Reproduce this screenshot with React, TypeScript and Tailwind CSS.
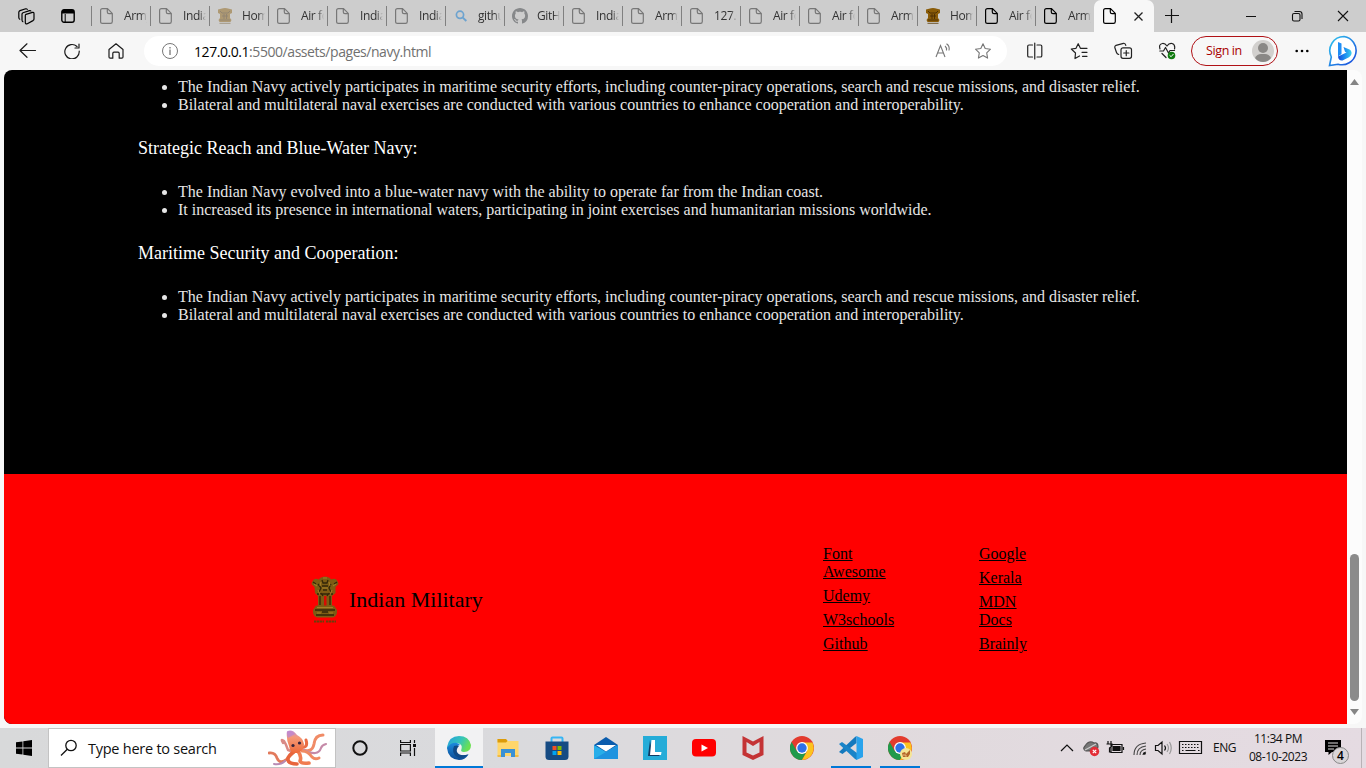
import React from "react";

type TabKind = "doc" | "emblem" | "search" | "github";

const tabs: { label: string; kind: TabKind; fresh?: boolean }[] = [
  { label: "Army", kind: "doc" },
  { label: "Indian", kind: "doc" },
  { label: "Home", kind: "emblem" },
  { label: "Air force", kind: "doc" },
  { label: "Indian", kind: "doc" },
  { label: "Indian", kind: "doc" },
  { label: "github", kind: "search" },
  { label: "GitHub", kind: "github" },
  { label: "Indian", kind: "doc" },
  { label: "Army", kind: "doc" },
  { label: "127.0", kind: "doc" },
  { label: "Air force", kind: "doc" },
  { label: "Air force", kind: "doc" },
  { label: "Army", kind: "doc" },
  { label: "Home", kind: "emblem", fresh: true },
  { label: "Air force", kind: "doc", fresh: true },
  { label: "Army", kind: "doc", fresh: true },
];

function DocIcon({ className }: { className: string }) {
  return (
    <svg className={"h-4 w-[13px] shrink-0 " + className} viewBox="0 0 13 16" fill="none" stroke="currentColor" strokeWidth="1.2">
      <path d="M2.5.6H7.5L12.3 5.4V13.5Q12.3 15.4 10.5 15.4H2.5Q.6 15.4 .6 13.5V2.5Q.6.6 2.5.6ZM7.3.8V4Q7.3 5.6 9 5.6H12.1" />
    </svg>
  );
}

function Emblem({ className }: { className: string }) {
  return (
    <svg className={"shrink-0 " + className} viewBox="0 0 28 47" preserveAspectRatio="none">
      <path d="M9 2Q14-1 19 2L20 3.500Q26 1 27.500 8L24.500 11L24.500 17L21 20L21 30H7L7 20L4 17L3.500 11L.5 8Q2 1 8 3.500Z" fill="#7d5c14" />
      <path d="M13 20H15.500V30H13Z" fill="#d90b00" />
      <path d="M5 29.500H23L26 34Q26.500 40 22 41.500H6Q1.500 40 2 34Z" fill="#7d5c14" />
      <path d="M4 34H24M5 39H23M7 8L10 12L8 16M20 8L18 12L20 16M11 4L12 7H16L17 4M11 10H17M12 14H16M9 20V29M19 20V29M11 36H17M6 18H22M2 6L5 8M26 6L23 8M10 17L12 20M18 17L16 20" stroke="#332608" strokeWidth="1.300" fill="none" />
      <path d="M3 8L6 10M25 8L22 10M12 2H16M10 6L9 10M18 6L19 10M6 31.500H22M6 37H10M18 37H22M11 12H17M7 14L9 19M21 14L19 19" stroke="#a8842b" strokeWidth=".9" fill="none" />
      <path d="M3 45.500H13M15 45.500H25" stroke="#6b3e0b" strokeWidth="2.200" strokeDasharray="2.500 .5" />
    </svg>
  );
}

function EmblemFavicon({ fresh }: { fresh?: boolean }) {
  return (
    <svg className={"h-4 w-4 shrink-0 " + (fresh ? "" : "opacity-45")} viewBox="0 0 16 16">
      <path d="M4 .8Q8-.6 12 .8L15 1.500V5L13 6V10L14.500 12L13.500 14H2.500L1.500 12L3 10V6L1 5V1.500Z" fill="#8a5c08" />
      <path d="M3 3L5 5H11L13 3M5 8H11M7 6V11M9.500 6V11M3 12H13" stroke="#4a2e04" strokeWidth=".9" fill="none" />
      <path d="M2.500 15.300H13.500" stroke="#70552a" strokeWidth="1" />
    </svg>
  );
}

function TabIcon({ kind, fresh }: { kind: TabKind; fresh?: boolean }) {
  if (kind === "emblem") return <EmblemFavicon fresh={fresh} />;
  if (kind === "search")
    return (
      <svg className="h-4 w-4 shrink-0 text-[#6da3cf]" viewBox="0 0 16 16" fill="none" stroke="currentColor">
        <circle cx="7" cy="6.800" r="3.600" strokeWidth="1.700" />
        <path d="M9.800 9.600L13.300 13" strokeWidth="2" />
      </svg>
    );
  if (kind === "github")
    return (
      <svg className="h-4 w-4 shrink-0 text-[#86888a]" viewBox="0 0 16 16" fill="currentColor">
        <path d="M8 0C3.580 0 0 3.580 0 8c0 3.540 2.290 6.530 5.470 7.590.4.070.55-.17.55-.38 0-.19-.01-.82-.01-1.490-2.010.37-2.530-.49-2.690-.94-.09-.23-.48-.94-.82-1.130-.28-.15-.68-.52-.01-.53.63-.01 1.080.58 1.230.82.72 1.210 1.870.87 2.330.66.07-.52.28-.87.51-1.070-1.780-.2-3.640-.89-3.640-3.950 0-.87.31-1.590.82-2.150-.08-.2-.36-1.020.08-2.120 0 0 .67-.21 2.200.82.64-.18 1.320-.27 2-.27s1.360.09 2 .27c1.530-1.040 2.200-.82 2.200-.82.44 1.100.16 1.920.08 2.120.51.56.82 1.270.82 2.150 0 3.070-1.870 3.750-3.650 3.950.29.25.54.73.54 1.480 0 1.070-.01 1.930-.01 2.200 0 .21.15.46.55.38A8.010 8.010 0 0 0 16 8c0-4.420-3.580-8-8-8z" />
      </svg>
    );
  return <DocIcon className={fresh ? "text-black" : "text-[#777]"} />;
}

function TabStrip() {
  return (
    <div className="flex h-8 bg-[#cdcdcd]">
      <div className="flex w-[91px] shrink-0 items-center pl-[18px]">
        <svg className="h-[17px] w-[17px]" viewBox="0 0 17 17" fill="none" stroke="#000" strokeWidth="1.200" strokeLinejoin="round">
          <path d="M8 6.300L14.500 4.400Q16 4.100 16 5.700V11Q16 12 15 12.600L9.300 15.700Q7.300 16.500 7.300 14.500V7.700Q7.300 6.700 8 6.300ZM5.300 14Q4 13.500 4 12V6.300Q4 5.200 5 4.700L11.500 2.600Q12.800 2.300 13 3.500M2.200 11.500Q.8 11 .8 9.500V4.200Q.8 3.200 2 2.600L7.700.8Q9.200.5 9.500 1.800" />
        </svg>
        <svg className="ml-[26px] h-[14px] w-[14px]" viewBox="0 0 14 14">
          <rect x=".8" y=".8" width="12.400" height="12.400" rx="2.200" fill="none" stroke="#000" strokeWidth="1.400" />
          <path d="M1 1H13V4.500H1Z" />
          <path d="M4.200 5V13" stroke="#000" />
        </svg>
      </div>
      {tabs.map((t, i) => (
        <div key={i} className="flex w-[59px] shrink-0 items-center">
          <div className="h-5 w-px shrink-0 bg-[#808080]" />
          <div className={"flex w-[18px] shrink-0 " + (t.kind === "doc" ? "ml-[8px] mr-[6px]" : "ml-[7px] mr-[7px]")}>
            <TabIcon kind={t.kind} fresh={t.fresh} />
          </div>
          <div className="w-[23px] overflow-hidden whitespace-nowrap font-['Open_Sans',sans-serif] text-[12px] tracking-[-0.4px] text-[#333] [mask-image:linear-gradient(to_right,black_72%,transparent)]">
            {t.label}
          </div>
        </div>
      ))}
      <div className="flex w-[60px] shrink-0 items-center rounded-t-[7px] bg-[#f7f7f7] pl-[9px]">
        <DocIcon className="text-black" />
        <svg className="ml-[18px] h-[9px] w-[9px]" viewBox="0 0 9 9" stroke="#222" strokeWidth="1.300">
          <path d="M.5.5L8.500 8.500M8.500.5L.5 8.500" />
        </svg>
      </div>
      <svg className="ml-[11px] mt-[9px] h-[14px] w-[14px] shrink-0" viewBox="0 0 14 14" stroke="#111" strokeWidth="1.200">
        <path d="M0 6.500H14M6.500 0V14" />
      </svg>
      <svg className="ml-[66px] mt-[9px] h-[14px] w-[104px] shrink-0" viewBox="0 0 104 14" fill="none" stroke="#111" strokeWidth="1.100">
        <path d="M1 7.500H11M93 2L103 12M103 2L93 12" />
        <rect x="47.500" y="4.500" width="7.500" height="7.500" rx="1.500" />
        <path d="M49.500 2.500H54.500Q57 2.500 57 5V10" />
      </svg>
    </div>
  );
}

function BingIcon() {
  return (
    <svg className="ml-[19px] h-8 w-[32px] shrink-0" viewBox="0 0 32 32">
      <defs>
        <linearGradient id="bingRing" x1="0" y1="0" x2="1" y2="1">
          <stop stopColor="#2fc7ee" />
          <stop offset="1" stopColor="#1845dc" />
        </linearGradient>
        <linearGradient id="bingB" x1="0" y1="0" x2="1" y2="0">
          <stop stopColor="#1648d8" />
          <stop offset=".5" stopColor="#1c8cf0" />
          <stop offset="1" stopColor="#3bd0ee" />
        </linearGradient>
      </defs>
      <path d="M16 1.500A14.200 14.200 0 1 1 10 29.200L1.500 30.500L3.300 22A14.200 14.200 0 0 1 16 1.500Z" fill="#fff" stroke="url(#bingRing)" strokeWidth="1.600" />
      <path d="M10 7L13.500 8.500V19L10 21.500Z" fill="#1f8df5" />
      <path d="M15.500 12L21.500 14.500Q24 16 23.500 19Q23 21 21 22.200L14.500 25.500Q10.500 26 10 21.500L18.500 17.500L17 16.800Z" fill="url(#bingB)" />
    </svg>
  );
}

function Toolbar() {
  return (
    <div className="flex h-[38px] items-center bg-[#f7f7f7]">
      <svg className="ml-[19px] h-4 w-[105px] shrink-0" viewBox="0 0 105 16" fill="none" stroke="#1b1b1b" strokeWidth="1.200" strokeLinecap="round" strokeLinejoin="round">
        <path d="M16.500 7.500H1M8 .8L1 7.500L8 14.300" />
        <path d="M58 3.500A7.200 7.200 0 1 0 60.200 8M60 1V5H56" />
        <path d="M90 6.500L97 .8L104 6.500V14Q104 15.200 102.800 15.200H100.200V10.500Q100.200 9.200 99 9.200H95Q93.800 9.200 93.800 10.500V15.200H91.200Q90 15.200 90 14Z" />
      </svg>
      <div className="ml-[20px] flex h-[30px] w-[863px] shrink-0 items-center rounded-full bg-white pl-[18px]">
        <svg className="h-4 w-4" viewBox="0 0 16 16" fill="none" stroke="#777">
          <circle cx="8" cy="8" r="7.500" />
          <path d="M8 6.500V12M8 4V5.400" strokeWidth="1.300" />
        </svg>
        <div className="ml-[16px] w-[714px] font-['Open_Sans',sans-serif] text-[14px] tracking-[-0.44px] text-[#707070]">
          <span className="text-black">127.0.0.1</span>:5500/assets/pages/navy.html
        </div>
        <svg className="ml-[27px] h-4 w-[58px] shrink-0" viewBox="0 0 58 16" fill="none" stroke="#777" strokeWidth="1.100">
          <path d="M1 14L5.500 2.500L10 14M2.500 10H8.500M10 3Q12 4.500 11.500 7.500M11.500.8Q15 3 14 7.500" />
          <path d="M48 .8L50.200 5.500L55.500 6.200L51.700 9.900L52.600 15.100L48 12.600L43.400 15.100L44.300 9.900L40.500 6.200L45.800 5.500Z" strokeLinejoin="round" />
        </svg>
      </div>
      <svg className="ml-[20px] h-[18px] w-[149px] shrink-0" viewBox="0 0 149 18" fill="none" stroke="#222" strokeWidth="1.200" strokeLinecap="round" strokeLinejoin="round">
        <path d="M5.500 3H2Q.7 3 .7 4.300V13.700Q.7 15 2 15H5.500M10 3H13.500Q14.800 3 14.800 4.300V13.700Q14.800 15 13.500 15H10M7.750 1V17" />
        <path d="M52.500 14L48 16.500L48.500 11L44.300 7L49 6.300L51.200 1.700L53.400 6.300H60M55 10.300H60M55.500 14.300H60" />
        <rect x="94" y="5.800" width="10.500" height="10.500" rx="2" />
        <path d="M99.250 8.500V13.700M96.700 11H101.900M91.700 12.500Q90 12 89.500 10.500L87.800 5.500Q87.500 4 89 3.300L96.500 1.300Q98.300 1 98.800 3.300" />
        <path d="M133 7Q131.500 2 135.500 1.500Q138 1.200 140 4Q142 1 145 1.500Q148.500 2.500 147.500 7M132.800 9H136.500L138.500 5.500L141.500 11L143 8.500H147.500M135 11.500L139 15.500" />
        <circle cx="144.500" cy="13.500" r="3.800" fill="#107c10" stroke="none" />
        <path d="M142.900 13.600L144.100 14.700L146.200 12.300" stroke="#fff" strokeWidth="1" />
      </svg>
      <div className="ml-[15px] flex h-[30px] w-[87px] shrink-0 items-center rounded-full border border-[#b01116] pl-[14px] font-['Open_Sans',sans-serif] text-[12.500px] tracking-[-0.38px] text-[#a80000]">
        <span className="w-[46px] whitespace-nowrap">Sign in</span>
        <svg className="h-[22px] w-[22px]" viewBox="0 0 22 22">
          <circle cx="11" cy="11" r="11" fill="#d2d0ce" />
          <circle cx="11" cy="8" r="5" fill="#8a8886" />
          <path d="M3 18Q5 14 9 14H13Q17 14 19 18Q16 22 11 22Q6 22 3 18Z" fill="#8a8886" />
        </svg>
      </div>
      <svg className="ml-[17px] h-[4px] w-[14px] shrink-0" viewBox="0 0 14 4">
        <circle cx="1.700" cy="2" r="1.300" /><circle cx="7" cy="2" r="1.300" /><circle cx="12.300" cy="2" r="1.300" />
      </svg>
      <BingIcon />
    </div>
  );
}

function Bullets({ items }: { items: string[] }) {
  return (
    <ul className="list-disc pl-10">
      {items.map((s) => (
        <li key={s} className="whitespace-nowrap">{s}</li>
      ))}
    </ul>
  );
}

function Heading({ children }: { children: React.ReactNode }) {
  return <h3 className="flex h-[69px] items-center pb-[2px] text-[18px] font-normal text-white">{children}</h3>;
}

const security = [
  "The Indian Navy actively participates in maritime security efforts, including counter-piracy operations, search and rescue missions, and disaster relief.",
  "Bilateral and multilateral naval exercises are conducted with various countries to enhance cooperation and interoperability.",
];

function FooterLinks({ links, className }: { links: string[]; className: string }) {
  return (
    <div className={"flex shrink-0 flex-col gap-1.5 text-[16px] leading-[18px] underline " + className}>
      {links.map((l) => (
        <a key={l} className="whitespace-pre-line">{l}</a>
      ))}
    </div>
  );
}

function Page() {
  return (
    <div className="mx-1 flex h-[654px] overflow-hidden rounded-lg bg-[#fcfcfc]">
      <div className="flex w-[1343px] shrink-0 flex-col bg-black font-['Liberation_Serif',serif]">
        <div className="h-[404px] pl-[134px] pt-[8px] text-[16px] leading-[18px] text-[#e6e6e6]">
          <Bullets items={security} />
          <Heading>Strategic Reach and Blue-Water Navy:</Heading>
          <Bullets
            items={[
              "The Indian Navy evolved into a blue-water navy with the ability to operate far from the Indian coast.",
              "It increased its presence in international waters, participating in joint exercises and humanitarian missions worldwide.",
            ]}
          />
          <Heading>Maritime Security and Cooperation:</Heading>
          <Bullets items={security} />
        </div>
        <div className="flex h-[250px] bg-[#ff0000] text-black">
          <div className="flex w-[819px] items-center pl-[307px]">
            <Emblem className="h-[47px] w-[28px]" />
            <span className="ml-[10px] text-[22px]">Indian Military</span>
          </div>
          <FooterLinks className="w-[156px] pt-[71px]" links={["Font\nAwesome", "Udemy", "W3schools", "Github"]} />
          <FooterLinks className="w-[156px] pt-[71px]" links={["Google", "Kerala", "MDN\nDocs", "Brainly"]} />
        </div>
      </div>
      <div className="flex w-[15px] flex-col items-center">
        <svg className="mt-[9px] h-[6px] w-[9px]" viewBox="0 0 9 6"><path d="M4.500 0L9 6H0Z" fill="#858585" /></svg>
        <div className="mt-[469px] h-[147px] w-[9px] rounded-full bg-[#8b8b8b]" />
        <svg className="mt-[8px] h-[6px] w-[9px]" viewBox="0 0 9 6"><path d="M0 0H9L4.500 6Z" fill="#858585" /></svg>
      </div>
    </div>
  );
}

function Octopus() {
  return (
    <svg className="h-[36px] w-[60px] shrink-0" viewBox="0 0 60 36" fill="none" strokeLinecap="round" strokeLinejoin="round">
      <defs>
        <linearGradient id="octo" x1="0" y1="0" x2="0" y2="1"><stop stopColor="#c58fd8" /><stop offset=".3" stopColor="#f59a78" /><stop offset="1" stopColor="#ee6a3a" /></linearGradient>
      </defs>
      <path d="M15 13Q12 8 16 11Q18 14 20 20L26 22" stroke="#d98a86" strokeWidth="2.400" />
      <path d="M1 23Q7 22 9 28Q12 35 19 29L26 22" stroke="#e27a5c" strokeWidth="2.800" />
      <path d="M6 34Q13 35 17 31" stroke="#b88bb4" strokeWidth="2" />
      <path d="M33 19Q44 24 46 14Q47 5 55 5" stroke="#f08b66" strokeWidth="3" />
      <path d="M36 20Q50 27 53 18Q54 15 58 14" stroke="#c58aa8" strokeWidth="2.200" />
      <path d="M31 17Q41 19 38 10" stroke="#ea6c44" strokeWidth="3" />
      <path d="M34 21Q40 21 44 27Q47 30 51 28" stroke="#f08a62" strokeWidth="3" />
      <path d="M27 21Q19 26 20 30Q21 34 29 34" stroke="#e8653c" strokeWidth="3.600" />
      <path d="M30 21Q34 27 32 31Q33 34 41 33" stroke="#f07c50" strokeWidth="3.600" />
      <path d="M19 1.500Q24-1.500 29 5Q35 8 36 14Q36 21 29 23Q22 24 21 16Q18 9 19 1.500Z" fill="url(#octo)" />
      <path d="M19 1.500Q23-.5 27 4L20 8Q18.500 5 19 1.500Z" fill="#bb86d3" opacity=".7" />
      <circle cx="25" cy="15.500" r="1.600" fill="#35243c" /><circle cx="31.500" cy="13" r="1.600" fill="#35243c" />
    </svg>
  );
}

function ChromeArt() {
  return (
    <>
      <circle cx="12" cy="12" r="12" fill="#e33b2e" />
      <path d="M1.600 6L6.800 15L12 18L17 15L12 24A12 12 0 0 1 1.600 6Z" fill="#219a4b" />
      <path d="M12 24A12 12 0 0 0 22.400 6.500H12L17.200 15Z" fill="#fcc31e" />
      <circle cx="12" cy="12" r="5.900" fill="#fff" />
      <circle cx="12" cy="12" r="4.700" fill="#2f71e8" />
    </>
  );
}

const appIcons: { art: React.ReactNode; state?: "active" | "open" }[] = [
  {
    state: "active",
    art: (
      <>
        <defs>
          <linearGradient id="edgeTop" x1="0" y1="0" x2="1" y2=".4"><stop stopColor="#239ce0" /><stop offset=".6" stopColor="#36c5b8" /><stop offset="1" stopColor="#6be052" /></linearGradient>
          <linearGradient id="edgeLow" x1="0" y1="0" x2="0" y2="1"><stop stopColor="#1c8bdd" /><stop offset="1" stopColor="#0c4b94" /></linearGradient>
        </defs>
        <path d="M0 11Q2 0 12 0Q22 0 24 9Q24 16 17 16Q13 16 14.500 13Q16 8 10 7Q4 7 0 13Z" fill="url(#edgeTop)" />
        <path d="M0 12Q4 6 10 7Q12 7.500 13 9Q8 10 8.500 15Q10 21 21.500 18.500Q18 24 12 24Q1 23 0 12Z" fill="url(#edgeLow)" />
        <path d="M7 10Q4 17 10 21Q15 24 21.500 18.500Q13 21 10 16Q9 13 12 10Q10 9 7 10Z" fill="#104a87" />
      </>
    ),
  },
  {
    art: (
      <>
        <path d="M1.500 3H10L12 5H22.500V20H1.500Z" fill="#ffd66b" />
        <path d="M1.500 3H10L11.500 5L10 6.500H1.500Z" fill="#dc9b09" />
        <path d="M5 13H19V21H15V17H9V21H5Z" fill="#3a91d5" />
        <path d="M1.500 19H5V21H1.500ZM19 19H22.500V21H19Z" fill="#f2bb42" />
      </>
    ),
  },
  {
    art: (
      <>
        <path d="M6.500 6V2.500Q6.500 1.500 7.500 1.500H16.500Q17.500 1.500 17.500 2.500V6" fill="none" stroke="#36b5f4" strokeWidth="2" />
        <path d="M.5 5.500H23.500V20.500Q23.500 24 20 24H4Q.5 24 .5 20.500Z" fill="#164b83" />
        <path d="M7.500 10H11.500V14H7.500Z" fill="#f25022" /><path d="M12.500 10H16.500V14H12.500Z" fill="#7fba00" />
        <path d="M7.500 15H11.500V19H7.500Z" fill="#00a4ef" /><path d="M12.500 15H16.500V19H12.500Z" fill="#ffb900" />
      </>
    ),
  },
  {
    art: (
      <>
        <path d="M0 9L12 1L24 9V23H0Z" fill="#0b5cad" />
        <path d="M0 9L12 16L24 9V23H0Z" fill="#28aee9" /><path d="M0 23L24 9V23Z" fill="#1e93df" /><path d="M2 9H22L12 15.500Z" fill="#fff" />
      </>
    ),
  },
  {
    art: (
      <>
        <path d="M0 0H24V24H0Z" fill="#25acd8" />
        <path d="M7 4L5 20H16L18 17H9Z" fill="#103b63" /><path d="M8.500 4H12V16H18.500L18 19H7Z" fill="#fff" />
      </>
    ),
  },
  {
    art: (
      <>
        <rect y="3" width="24" height="17.500" rx="4" fill="#f00" /><path d="M9.500 8.500L16 12L9.500 15.500Z" fill="#fff" />
      </>
    ),
  },
  {
    art: (
      <>
        <path d="M1.500 0L12 5.500L22.500 0V19L12 24L1.500 19ZM5.500 6V16.500L12 19.500L18.500 16.500V6L12 10Z" fill="#c43335" fillRule="evenodd" />
      </>
    ),
  },
  { art: <ChromeArt /> },
  {
    state: "open",
    art: (
      <>
        <path d="M17.500 0V7L3.500 18L0 16L16 1Z" fill="#1479bd" />
        <path d="M0 8L3 6L18 17V24L16 23Z" fill="#1984c8" />
        <path d="M17.500 0L24 3V21L17.500 24Z" fill="#29a3ec" />
      </>
    ),
  },
  {
    state: "open",
    art: (
      <>
        <ChromeArt />
        <circle cx="18" cy="18" r="6" fill="#f6e594" /><path d="M14 17L17 16L18 18L22 14V18L20 21H15Z" fill="#b5662b" /><path d="M15 19H18V21" stroke="#f5cf91" strokeWidth=".8" fill="none" />
      </>
    ),
  },
];

function Taskbar() {
  return (
    <div className="flex h-10 bg-[linear-gradient(90deg,#d8d9da_0%,#dadadd_38%,#e0dadd_62%,#e5dbe2_100%)] font-['Open_Sans',sans-serif] text-[#111]">
      <div className="flex w-12 shrink-0 items-center pl-4">
        <svg className="h-4 w-4" viewBox="0 0 16 16"><path d="M0 2.300L6.500 1.400V7.500H0ZM7.300 1.300L16 0V7.500H7.300ZM0 8.400H6.500V14.600L0 13.700ZM7.300 8.400H16V16L7.300 14.700Z" /></svg>
      </div>
      <div className="flex w-[288px] shrink-0 items-center border border-[#c3c3c3] bg-white pl-[11px]">
        <svg className="h-[18px] w-[18px]" viewBox="0 0 18 18" fill="none" stroke="#111" strokeWidth="1.300"><circle cx="11" cy="6.500" r="5.200" /><path d="M7.300 10.200L1 16.500" /></svg>
        <span className="ml-[10px] w-[180px] whitespace-nowrap pt-[2px] text-[14.500px] tracking-[-0.25px]">Type here to search</span>
        <Octopus />
      </div>
      <div className="flex w-[99px] shrink-0 items-center pl-[16px]">
        <svg className="h-4 w-4" viewBox="0 0 16 16"><circle cx="8" cy="8" r="6.700" fill="none" stroke="#111" strokeWidth="2" /></svg>
        <svg className="ml-8 h-4 w-4" viewBox="0 0 16 16" fill="none" stroke="#111" strokeWidth="1.200"><path d="M.6 0V2.500H10.400V0M.6 16V13H10.400V16M.6 4.500H10.400V11H.6ZM14.500 0V3M14.500 8V16" /><path d="M13 4H16V7H13Z" fill="#111" stroke="none" /></svg>
      </div>
      {appIcons.map((a, i) => (
        <div key={i} className="mr-px flex w-12 shrink-0 flex-col items-center">
          <div className={"flex h-[38px] w-12 items-center justify-center pt-[2px] " + (a.state === "active" ? "bg-[#f2f2f3]" : "")}>
            <svg className="h-6 w-6" viewBox="0 0 24 24">{a.art}</svg>
          </div>
          {a.state && <div className={"h-[2px] bg-[#0078d7] " + (a.state === "active" ? "w-12" : "w-10")} />}
        </div>
      ))}
      <svg className="ml-[135px] mt-[11px] h-[18px] w-[144px] shrink-0" viewBox="0 0 144 18" fill="none" stroke="#111" strokeWidth="1.200">
        <path d="M1 12L7 6L13 12" />
        <path d="M26 12Q22 10 25 7Q29 1 34 4Q38 3 38 8Q37 12 26 12Z" fill="#777" stroke="#555" /><path d="M25 11L36 5" stroke="#ccc" />
        <circle cx="34.500" cy="12.500" r="4.700" fill="#e32d36" stroke="none" /><path d="M32.800 10.800L36.200 14.200M36.200 10.800L32.800 14.200" stroke="#fff" />
        <path d="M51 5.500H62V13.500H51ZM63.500 8V11M48 2V5M51 2V5M46.500 5H52V7L49.500 9V13H51" /><path d="M53 7.500H60V11.500H53Z" fill="#111" />
        <path d="M74 16Q74 5 86 4M77 16Q77 8 86 7M80 16Q80 11 86 10M83 16Q83 14 86 13" stroke="#444" strokeWidth="1.100" /><circle cx="84.500" cy="14.500" r="1.300" fill="#111" stroke="none" />
        <path d="M95.500 6.500H98L102 3V15L98 11.500H95.500ZM104.500 6.500Q106.500 9 104.500 11.500" /><path d="M107 5Q110 9 107 13M109.500 3Q113 9 109.500 15" stroke="#999" />
        <path d="M119.500 2.500H141.500V14.500H119.500Z" /><path d="M122 5.500H139.500M122 8.500H139.500" strokeDasharray="1.500 1.500" /><path d="M122 11.500H123.500M125.500 11.500H135.500M138 11.500H139.500" />
      </svg>
      <div className="ml-[9px] flex w-[27px] shrink-0 items-center text-[12px] tracking-[-0.5px]">ENG</div>
      <div className="ml-[3px] flex w-[70px] shrink-0 flex-col items-center justify-center whitespace-nowrap text-[12px] leading-[18px] tracking-[-0.44px]">
        <span>11:34 PM</span>
        <span>08-10-2023</span>
      </div>
      <svg className="ml-[11px] mt-[10px] h-[28px] w-[29px] shrink-0" viewBox="0 0 29 28">
        <path d="M1 2H17V14H8L4.500 17V14H1Z" fill="#000" /><path d="M4 5H14M4 8H14M4 11H10" stroke="#ddd" strokeWidth="1" />
        <circle cx="16.500" cy="17.500" r="8" fill="#d9d5d7" stroke="#888" />
        <text x="16.500" y="22" textAnchor="middle" fontSize="12" fontWeight="600" fontFamily="Open Sans">4</text>
      </svg>
      <div className="ml-auto mr-[4px] w-px bg-[#b9b2b6]" />
    </div>
  );
}

export default function App() {
  return (
    <div className="h-[768px] w-[1366px] overflow-hidden bg-[#f7f7f7]">
      <TabStrip />
      <Toolbar />
      <Page />
      <div className="h-1 bg-[#f7f7f7]" />
      <Taskbar />
    </div>
  );
}
